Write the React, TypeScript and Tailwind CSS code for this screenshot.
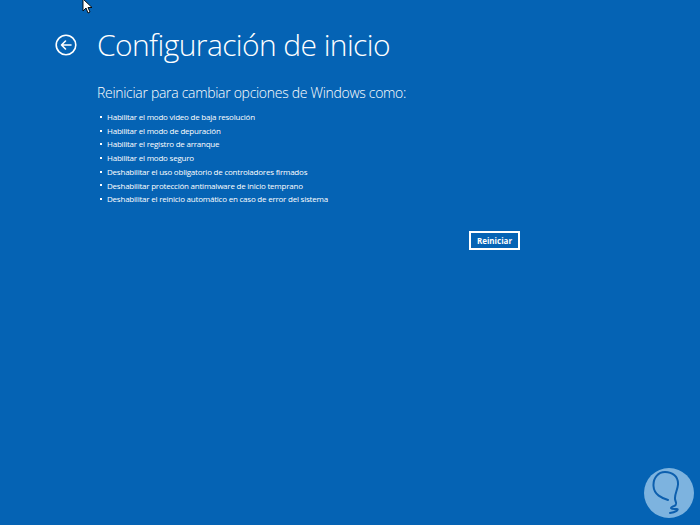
import React from 'react';

const items = [
    'Habilitar el modo video de baja resolución',
    'Habilitar el modo de depuración',
    'Habilitar el registro de arranque',
    'Habilitar el modo seguro',
    'Deshabilitar el uso obligatorio de controladores firmados',
    'Deshabilitar protección antimalware de inicio temprano',
    'Deshabilitar el reinicio automático en caso de error del sistema',
];

const BackIcon = () => (
    <svg width="22" height="22" viewBox="0 0 22 22" fill="none" stroke="white" strokeWidth="1.6">
        <circle cx="11" cy="11" r="9.8" />
        <path d="M16 11H6.5M10.5 7L6.5 11L10.5 15" strokeLinecap="round" strokeLinejoin="round" />
    </svg>
);

const Cursor = () => (
    <svg width="10" height="16" viewBox="0 0 10 16" className="absolute left-[82px] top-[-2px]">
        <path d="M1 1V13L4 10L6 15L8 14L6 9.5H10Z" fill="white" stroke="black" strokeWidth="0.9" strokeLinejoin="round" />
    </svg>
);

const Logo = () => (
    <svg width="50" height="50" viewBox="0 0 50 50" className="absolute left-[644px] top-[468px]">
        <circle cx="25" cy="25" r="25" fill="#7db3df" />
        <path
            d="M24 32C18 30 10 27 9.5 18C9 9.5 14.5 4 21 4C28.5 4 34.5 8.5 34 16.5C33.5 22.5 30.5 26 31 31C31.5 34.5 34 36.5 30 38C25.5 39.5 26 41.5 32.5 41C36 41 31.5 44.5 26 45"
            fill="none"
            stroke="#0d5fae"
            strokeWidth="2"
            strokeLinecap="round"
            strokeLinejoin="round"
        />
    </svg>
);

const App = () => {
    return (
        <div
            className="relative h-[525px] w-[700px] overflow-hidden bg-[#0563b4] text-white"
            style={{ fontFamily: '"Open Sans", "Noto Sans", sans-serif' }}
        >
            <Cursor />
            <div className="pl-[55px] pt-[27px]">
                <div className="flex items-center gap-[20px]">
                    <BackIcon />
                    <h1 className="text-[30px] font-light leading-[36px] tracking-[-0.6px]">Configuración de inicio</h1>
                </div>
                <div className="w-[465px] pl-[42px] pt-[20px]">
                    <p className="text-[14px] font-light leading-[20px] tracking-[-0.3px]">Reiniciar para cambiar opciones de Windows como:</p>
                    <ul className="mt-[7px] flex flex-col">
                        {items.map((item) => (
                            <li key={item} className="flex items-center gap-[5px] text-[8px] leading-[13.7px] tracking-[-0.22px]">
                                <span className="ml-[3px] h-[2px] w-[2px] bg-white" />
                                {item}
                            </li>
                        ))}
                    </ul>
                    <div className="mt-[25px] flex w-[423px] justify-end">
                        <button className="w-[51px] border-2 border-white py-[1px] text-[8px] font-bold leading-[13px]">
                            Reiniciar
                        </button>
                    </div>
                </div>
            </div>
            <Logo />
        </div>
    );
};

export default App;
